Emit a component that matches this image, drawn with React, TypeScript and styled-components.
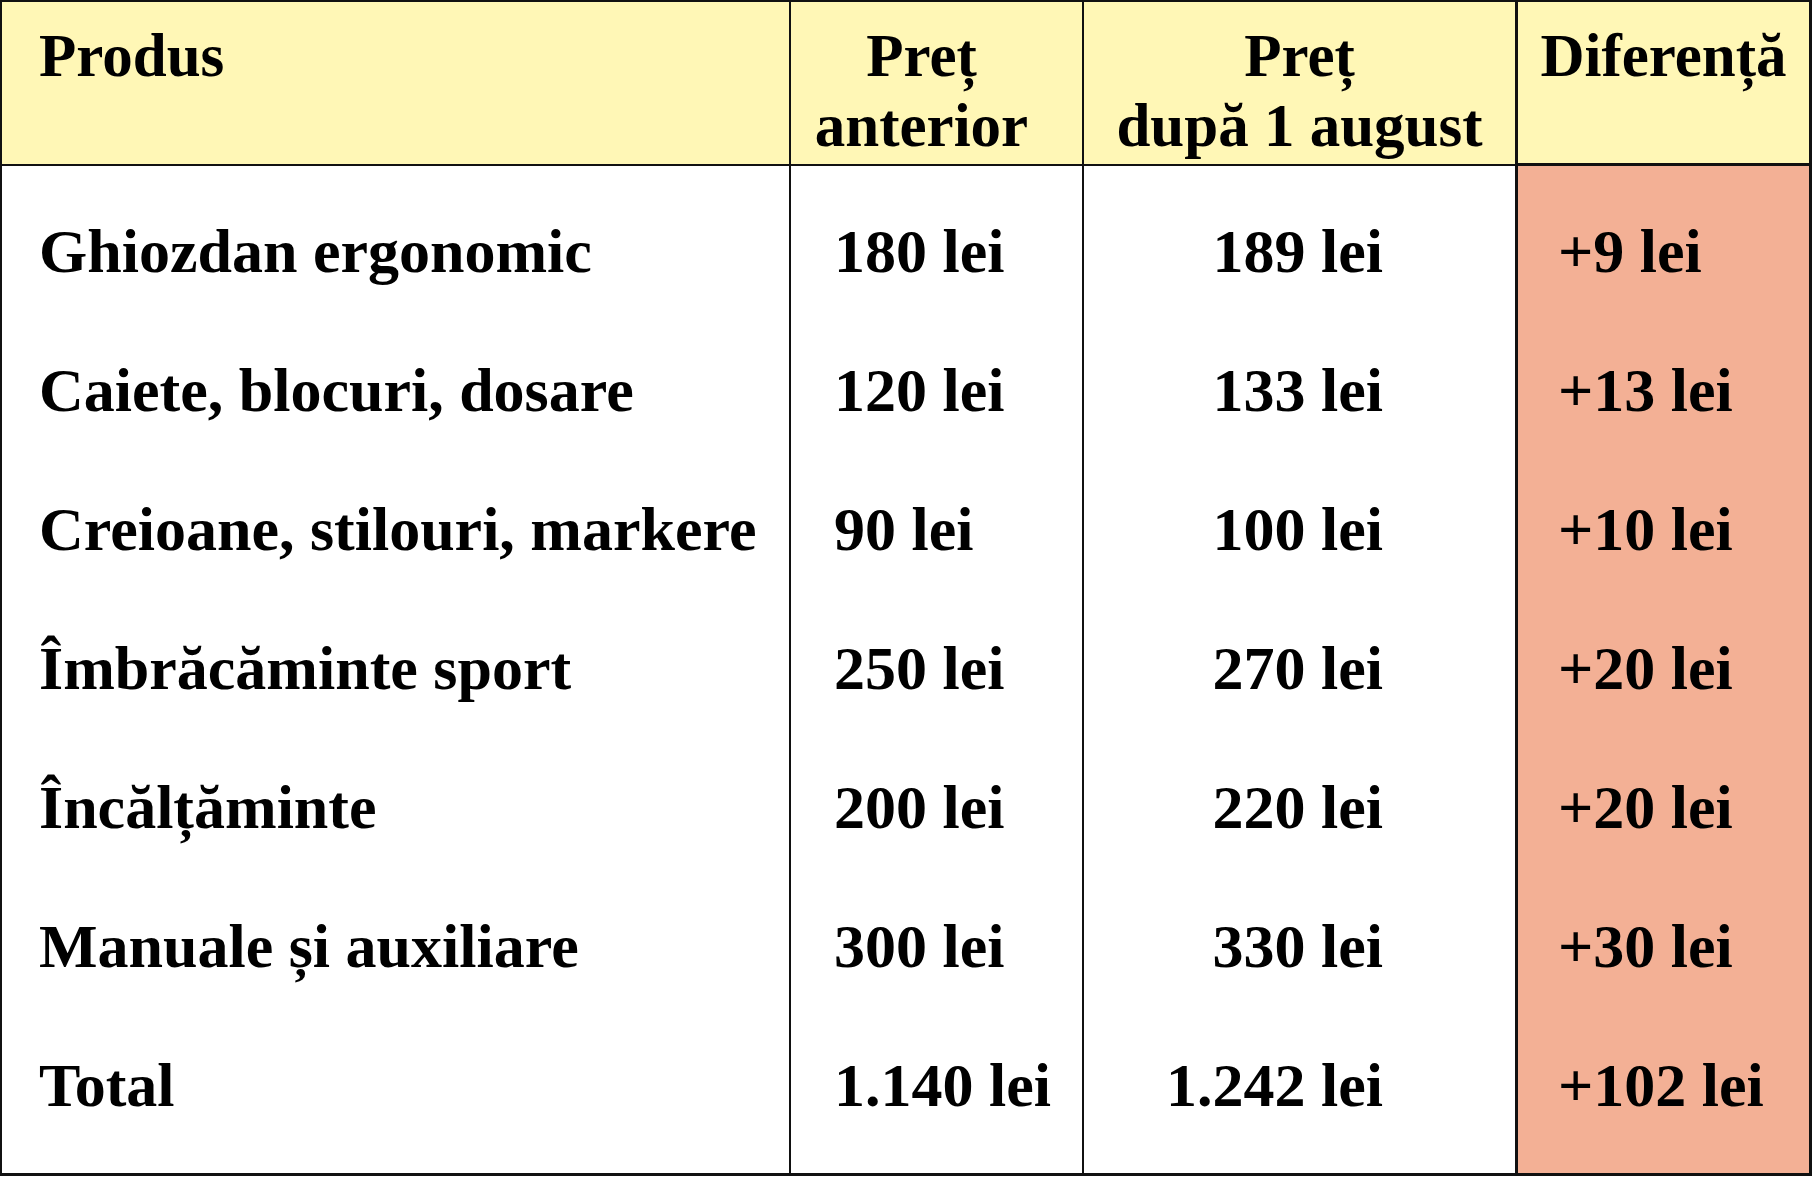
import styled, { createGlobalStyle } from "styled-components";

const GlobalStyle = createGlobalStyle`
  *, *::before, *::after {
    box-sizing: border-box;
  }
  body {
    margin: 0;
    background: #ffffff;
    font-family: "Liberation Serif", "Times New Roman", serif;
    color: #000;
  }
`;

type Align = "left" | "center" | "right";

interface Column {
  head: string[];
  headAlign: Align;
  headPadRight: number;
  bodyAlign: Align;
  padLeft: number;
  padRight: number;
  accent?: boolean;
  thick?: boolean;
  values: string[];
}

const columns: Column[] = [
  {
    head: ["Produs"],
    headAlign: "left",
    headPadRight: 0,
    bodyAlign: "left",
    padLeft: 37,
    padRight: 0,
    values: [
      "Ghiozdan ergonomic",
      "Caiete, blocuri, dosare",
      "Creioane, stilouri, markere",
      "Îmbrăcăminte sport",
      "Încălțăminte",
      "Manuale și auxiliare",
      "Total",
    ],
  },
  {
    head: ["Preț", "anterior"],
    headAlign: "center",
    headPadRight: 30,
    bodyAlign: "left",
    padLeft: 43,
    padRight: 0,
    values: ["180 lei", "120 lei", "90 lei", "250 lei", "200 lei", "300 lei", "1.140 lei"],
  },
  {
    head: ["Preț", "după 1 august"],
    headAlign: "center",
    headPadRight: 0,
    bodyAlign: "right",
    padLeft: 0,
    padRight: 132,
    values: ["189 lei", "133 lei", "100 lei", "270 lei", "220 lei", "330 lei", "1.242 lei"],
  },
  {
    head: ["Diferență"],
    headAlign: "center",
    headPadRight: 0,
    bodyAlign: "left",
    padLeft: 40,
    padRight: 0,
    accent: true,
    thick: true,
    values: ["+9 lei", "+13 lei", "+10 lei", "+20 lei", "+20 lei", "+30 lei", "+102 lei"],
  },
];

const Table = styled.div`
  width: 1812px;
  display: grid;
  grid-template-columns: 787px 293px 433px 294px;
  grid-template-rows: 164px 1007px;
  border-top: 2px solid #111;
  border-left: 2px solid #111;
  border-right: 3px solid #111;
  border-bottom: 3px solid #111;
`;

const HeadCell = styled.div<{ $align: Align; $padRight: number; $first: boolean; $thick?: boolean }>`
  background: #fff7b6;
  border-bottom: ${(p) => (p.$thick ? 3 : 2)}px solid #111;
  border-left: ${(p) => (p.$first ? "none" : `${p.$thick ? 3 : 2}px solid #111`)};
  padding: 19px ${(p) => p.$padRight}px 0 ${(p) => (p.$align === "left" ? 37 : 0)}px;
  text-align: ${(p) => p.$align};
  font-size: 61px;
  font-weight: 700;
  line-height: 70px;
  white-space: nowrap;
`;

const BodyColumn = styled.div<{ $first: boolean; $accent?: boolean; $thick?: boolean }>`
  display: flex;
  flex-direction: column;
  padding: 16px 0 18px;
  background: ${(p) => (p.$accent ? "#f3b095" : "#ffffff")};
  border-left: ${(p) => (p.$first ? "none" : `${p.$thick ? 3 : 2}px solid #111`)};
`;

const Cell = styled.div<{ $align: Align; $padLeft: number; $padRight: number }>`
  height: 139px;
  line-height: 139px;
  padding: 0 ${(p) => p.$padRight}px 0 ${(p) => p.$padLeft}px;
  text-align: ${(p) => p.$align};
  font-size: 62px;
  font-weight: 700;
  white-space: nowrap;
`;

export default function App() {
  return (
    <>
      <GlobalStyle />
      <Table>
        {columns.map((c, i) => (
          <HeadCell
            key={`h${i}`}
            $align={c.headAlign}
            $padRight={c.headPadRight}
            $first={i === 0}
            $thick={c.thick}
          >
            {c.head.map((line) => (
              <div key={line}>{line}</div>
            ))}
          </HeadCell>
        ))}
        {columns.map((c, i) => (
          <BodyColumn key={`b${i}`} $first={i === 0} $accent={c.accent} $thick={c.thick}>
            {c.values.map((v, j) => (
              <Cell key={j} $align={c.bodyAlign} $padLeft={c.padLeft} $padRight={c.padRight}>
                {v}
              </Cell>
            ))}
          </BodyColumn>
        ))}
      </Table>
    </>
  );
}
